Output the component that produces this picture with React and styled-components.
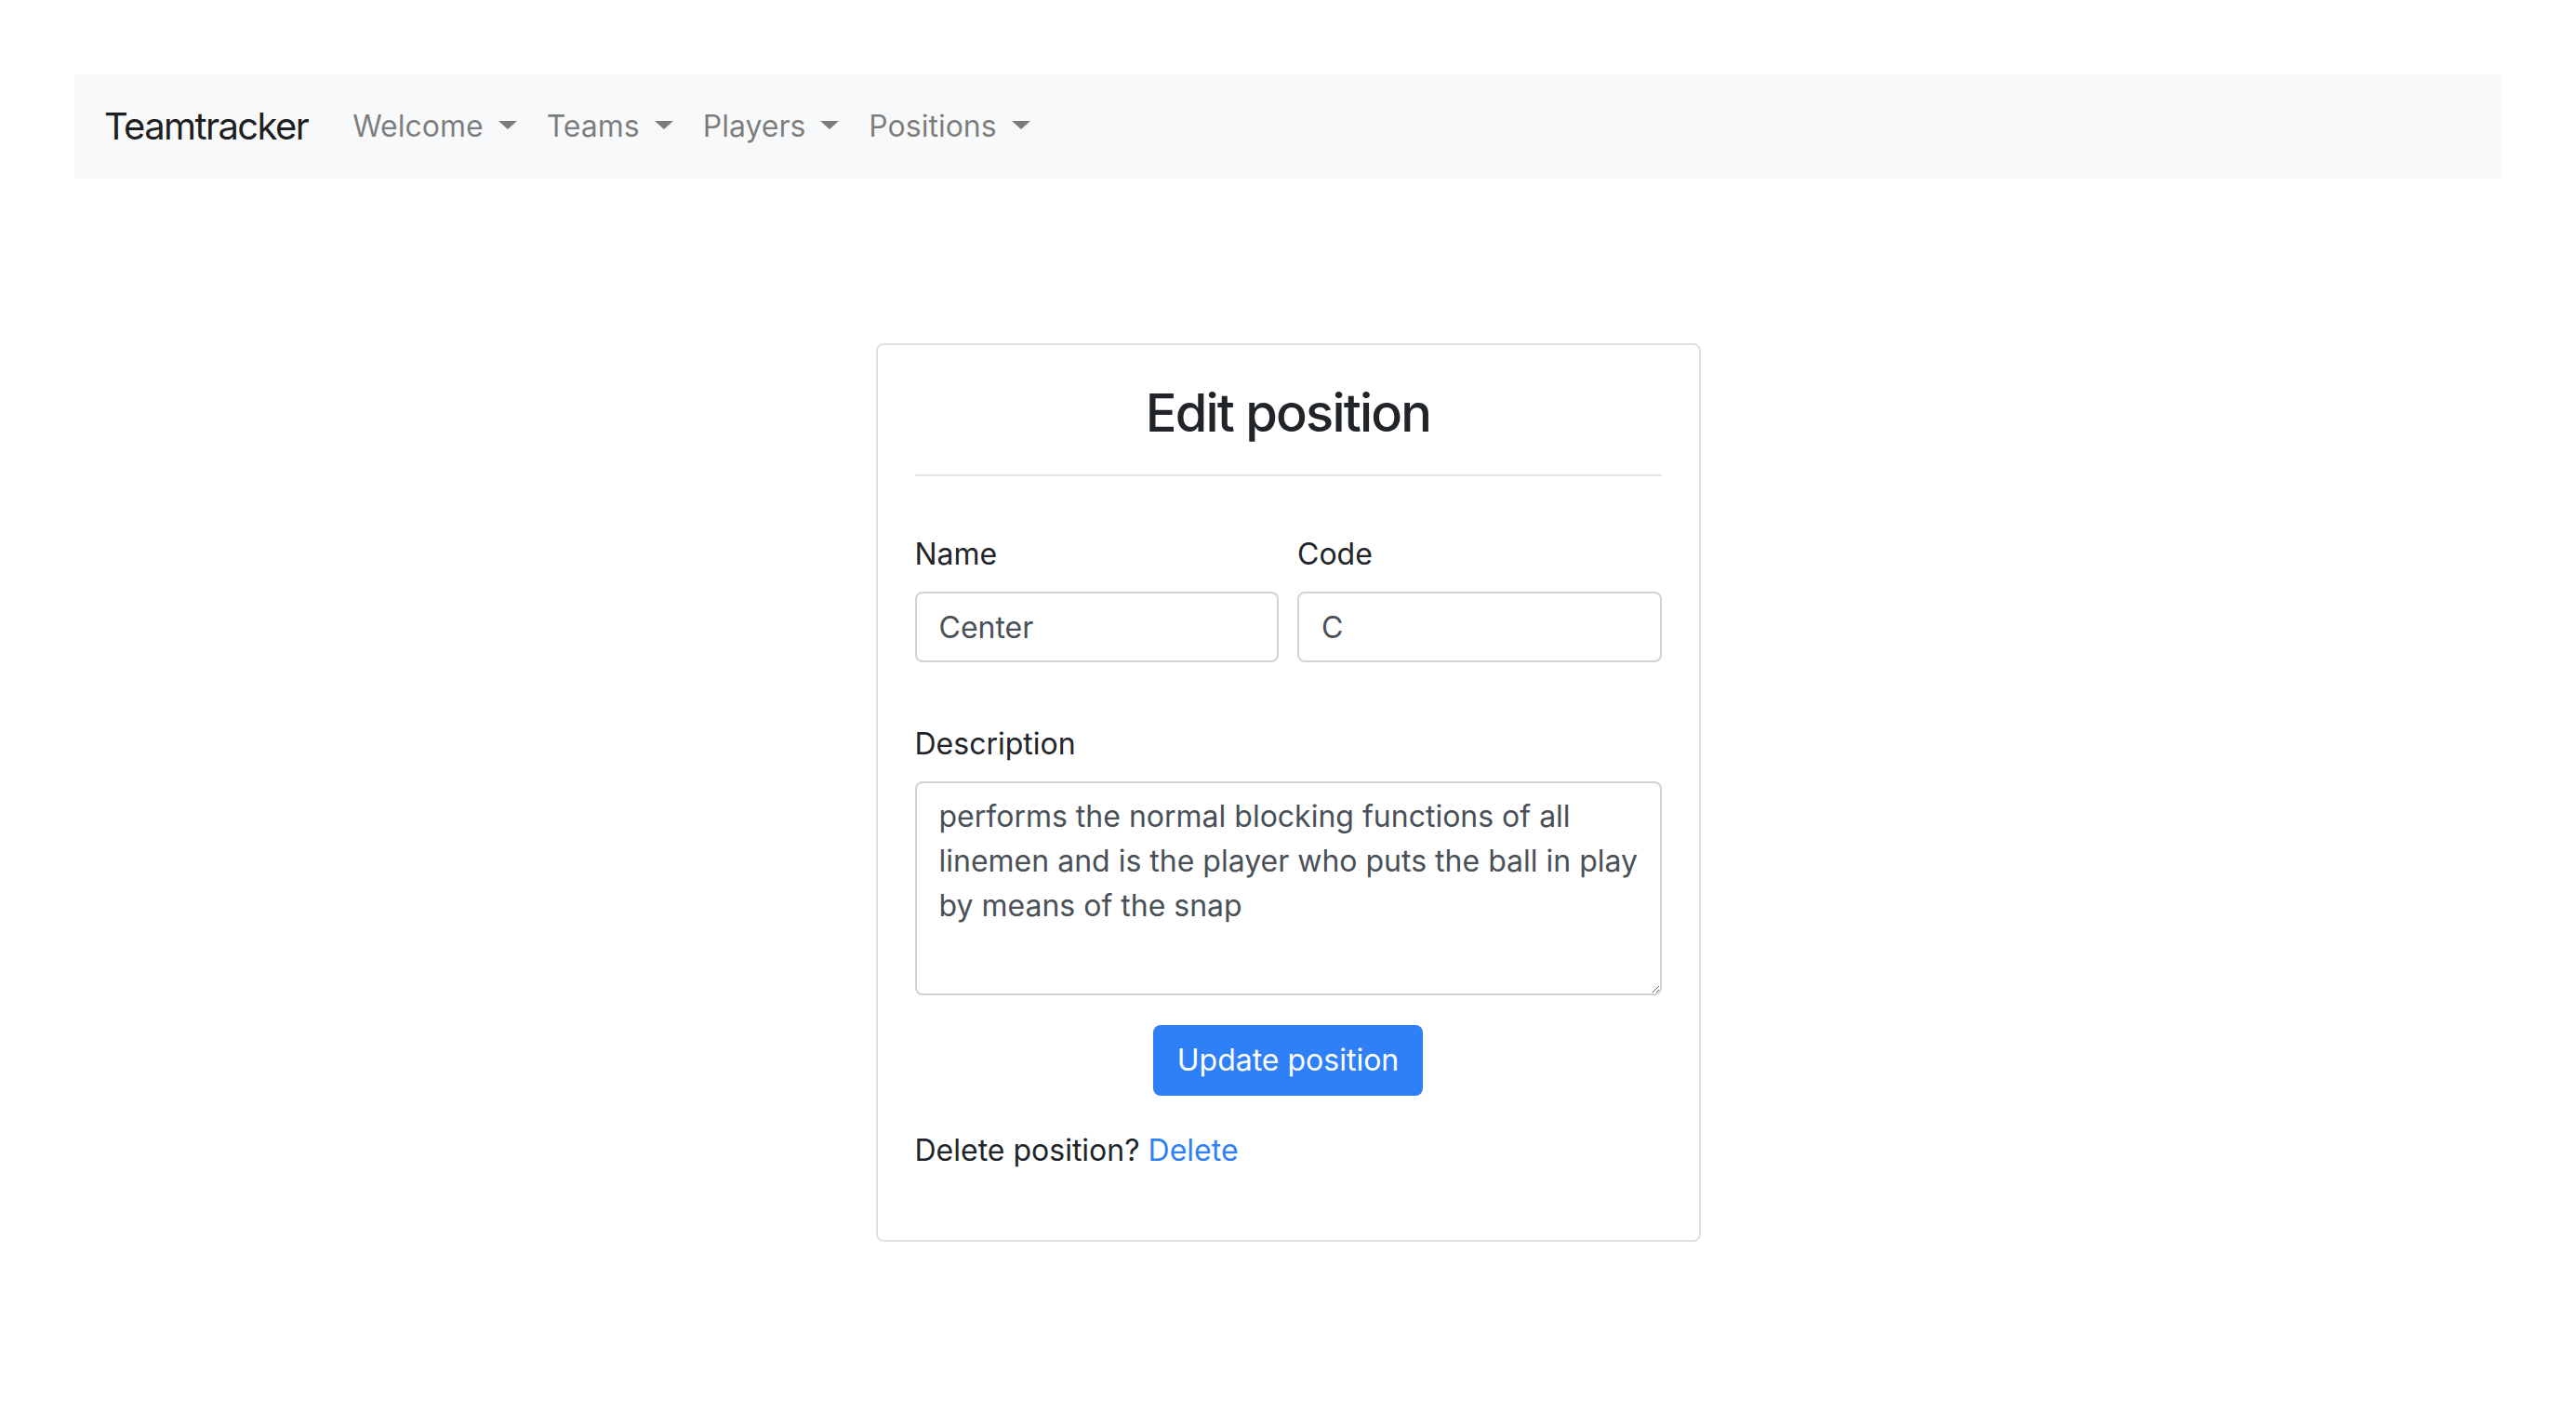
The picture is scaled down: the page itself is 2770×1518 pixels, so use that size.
import styled, { createGlobalStyle } from "styled-components";

const GlobalStyle = createGlobalStyle`
  html, body {
    margin: 0;
    padding: 0;
    background: #fff;
  }
  body {
    font-family: Inter, "Liberation Sans", Arial, sans-serif;
    color: #212529;
    font-size: 32px;
    line-height: 1.5;
  }
  *, *::before, *::after {
    box-sizing: border-box;
  }
`;

const NAV_ITEMS = ["Welcome", "Teams", "Players", "Positions"];

function App() {
  return (
    <>
      <GlobalStyle />
      <StPage>
        <StNavbar>
          <StBrand href="#">Teamtracker</StBrand>
          <StNavList>
            {NAV_ITEMS.map((item) => (
              <li key={item}>
                <StNavLink href="#">{item}</StNavLink>
              </li>
            ))}
          </StNavList>
        </StNavbar>

        <StCard>
          <StTitle>Edit position</StTitle>
          <StRule />
          <form onSubmit={(e) => e.preventDefault()}>
            <StRow>
              <StGroup>
                <StLabel htmlFor="name">Name</StLabel>
                <StInput id="name" type="text" defaultValue="Center" />
              </StGroup>
              <StGroup>
                <StLabel htmlFor="code">Code</StLabel>
                <StInput id="code" type="text" defaultValue="C" />
              </StGroup>
            </StRow>
            <StGroup>
              <StLabel htmlFor="description">Description</StLabel>
              <StTextarea
                id="description"
                rows={4}
                defaultValue="performs the normal blocking functions of all linemen and is the player who puts the ball in play by means of the snap"
              />
            </StGroup>
            <StActions>
              <StButton type="submit">Update position</StButton>
            </StActions>
          </form>
          <StDeleteText>
            Delete position? <StLink href="#">Delete</StLink>
          </StDeleteText>
        </StCard>
      </StPage>
    </>
  );
}

export default App;

const StPage = styled.div`
  padding: 80px 80px 120px;
  display: flex;
  flex-direction: column;
  align-items: center;
`;

const StNavbar = styled.nav`
  align-self: stretch;
  display: flex;
  align-items: center;
  height: 112px;
  padding: 16px 32px;
  background: #f8f9fa;
`;

const StBrand = styled.a`
  font-size: 40px;
  line-height: 60px;
  letter-spacing: -1.6px;
  padding: 10px 0;
  margin-right: 32px;
  color: rgba(0, 0, 0, 0.9);
  text-decoration: none;
  white-space: nowrap;
`;

const StNavList = styled.ul`
  display: flex;
  list-style: none;
  margin: 0;
  padding: 0;
`;

const StNavLink = styled.a`
  display: block;
  padding: 16px;
  line-height: 48px;
  color: rgba(0, 0, 0, 0.5);
  text-decoration: none;
  white-space: nowrap;

  &::after {
    content: "";
    display: inline-block;
    margin-left: 16px;
    vertical-align: 0.255em;
    border-top: 0.3em solid;
    border-right: 0.33em solid transparent;
    border-left: 0.33em solid transparent;
    border-bottom: 0;
  }
`;

const StCard = styled.div`
  width: 887px;
  margin-top: 177px;
  padding: 40px;
  border: 2px solid rgba(0, 0, 0, 0.125);
  border-radius: 8px;
`;

const StTitle = styled.h3`
  margin: 0;
  font-size: 56px;
  font-weight: 500;
  line-height: 1.2;
  letter-spacing: -1.8px;
  text-align: center;
  color: #212529;
`;

const StRule = styled.hr`
  margin: 32px 0 60px;
  border: 0;
  border-top: 2px solid rgba(0, 0, 0, 0.1);
`;

const StRow = styled.div`
  display: grid;
  grid-template-columns: 1fr 1fr;
  column-gap: 20px;
  margin-bottom: 32px;
`;

const StGroup = styled.div`
  margin-bottom: 32px;
`;

const StLabel = styled.label`
  display: block;
  margin-bottom: 16px;
  line-height: 48px;
`;

const StInput = styled.input`
  display: block;
  width: 100%;
  height: 76px;
  padding: 12px 24px;
  font-family: inherit;
  font-size: 32px;
  line-height: 48px;
  color: #495057;
  background: #fff;
  border: 2px solid #ced4da;
  border-radius: 8px;
  outline: none;
`;

const StTextarea = styled.textarea`
  display: block;
  width: 100%;
  height: 230px;
  padding: 12px 18px 12px 24px;
  font-family: inherit;
  font-size: 32px;
  line-height: 48px;
  color: #495057;
  background: #fff;
  border: 2px solid #ced4da;
  border-radius: 8px;
  outline: none;
  resize: vertical;
`;

const StActions = styled.div`
  display: flex;
  justify-content: center;
  margin-top: 3px;
  margin-bottom: 35px;
`;

const StButton = styled.button`
  height: 76px;
  padding: 12px 24px;
  font-family: inherit;
  font-size: 32px;
  line-height: 48px;
  color: #fff;
  background: #2f7ff6;
  border: 2px solid #2f7ff6;
  border-radius: 8px;
  cursor: pointer;
`;

const StDeleteText = styled.p`
  margin: 0 0 32px;
  line-height: 48px;
`;

const StLink = styled.a`
  color: #2f7ff6;
  text-decoration: none;
`;
